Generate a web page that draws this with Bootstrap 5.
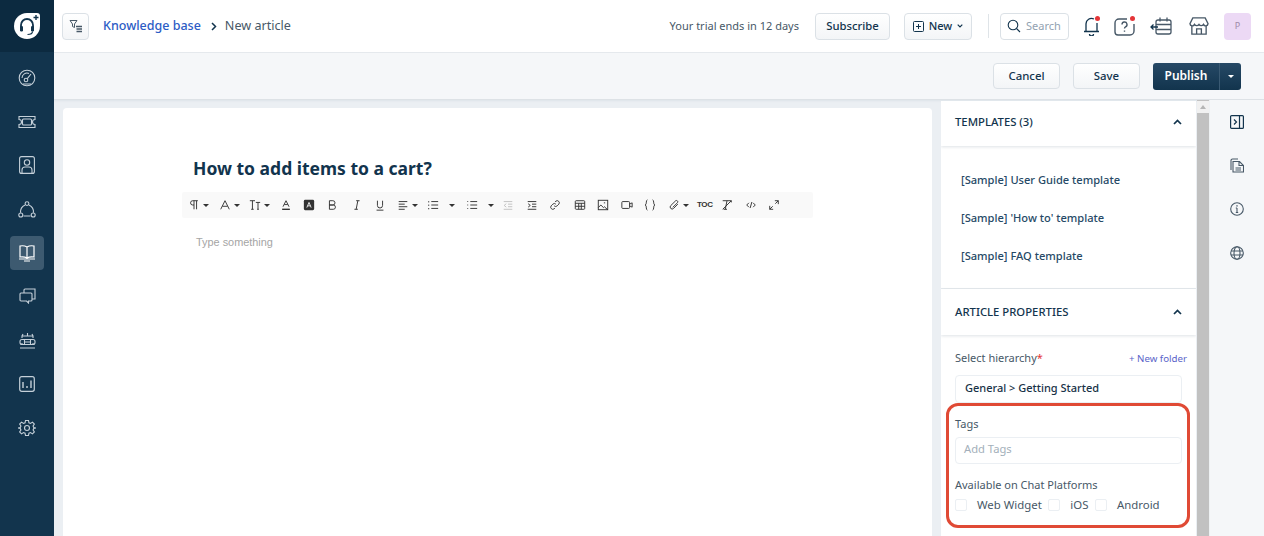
<!DOCTYPE html>
<html lang="en">
<head>
  <meta charset="UTF-8">
  <title>Knowledge base - New article</title>
  <link href="https://cdn.jsdelivr.net/npm/bootstrap@5.3.0/dist/css/bootstrap.min.css" rel="stylesheet">
  <style>
    html, body { height: 536px; overflow: hidden; }
    body { font-family: "Noto Sans", "Liberation Sans", sans-serif; color: #12344d; font-size: 11px; background: #ebeff3; }
    svg { display: block; flex: none; }
    .app-side { width: 54px; flex: none; background: #12344d; }
    .side-logo { height: 52px; background: #0c2a40; }
    .side-items { padding-top: 9px; gap: 9.7px; }
    .side-item { width: 34px; height: 34px; margin: 0 auto; border-radius: 4px; color: #c5d0d9; }
    .side-item.is-on { background: #3d5a70; color: #fff; }
    .top-bar { height: 53px; background: #fff; border-bottom: 1px solid #e6eaee; padding: 0 13px 0 8px; }
    .tool-btn { border: 1px solid #dbe1e6; border-radius: 4px; background: linear-gradient(#fff, #f3f5f7); color: #12344d; }
    .square-btn { width: 27px; height: 27px; }
    .crumb-link { font-size: 12.5px; color: #2c5cc5; font-weight: 500; margin-left: 14px; }
    .crumb-arrow { margin: 0 8px 0 10px; }
    .crumb-now { font-size: 12.6px; color: #475867; }
    .trial-text { color: #475867; font-size: 11px; margin-right: 16px; }
    .sub-btn { height: 27px; width: 75px; font-size: 11.3px; font-weight: 500; margin-right: 14px; }
    .new-btn { height: 27px; width: 68px; font-size: 11px; font-weight: 500; gap: 5px; }
    .bar-sep { width: 1px; height: 24px; background: #dfe4e8; margin: 0 11px 0 16px; }
    .search-box { width: 69px; height: 27px; border: 1px solid #dbe1e6; border-radius: 4px; color: #92a2b1; font-size: 11px; padding-left: 6px; gap: 5px; margin-right: 14px; }
    .top-icon { position: relative; color: #12344d; }
    .gap-bell { margin-right: 14px; }
    .gap-help { margin-right: 15px; }
    .gap-cal { margin-right: 17px; }
    .gap-store { margin-right: 15px; }
    .red-dot { position: absolute; width: 5px; height: 5px; background: #e43538; border-radius: 50%; top: 0; right: 0; }
    .user-chip { width: 27px; height: 27px; background: #ecd9f5; border-radius: 4px; color: #9f8aa8; font-size: 9px; }
    .action-bar { height: 47px; background: #f5f7f9; border-bottom: 1px solid #dde2e6; padding-right: 23px; box-shadow: 0 1px 2px rgba(18,52,77,.06); }
    .act-btn { height: 26px; font-size: 11.4px; font-weight: 500; }
    .act-cancel { width: 67px; margin-right: 13px; }
    .act-save { width: 67px; margin-right: 13px; }
    .publish-wrap { height: 27px; border-radius: 3px; overflow: hidden; background: linear-gradient(#264966, #12344d); color: #fff; font-size: 12px; font-weight: 600; }
    .publish-main { width: 67px; border-right: 1px solid #3a5a73; }
    .publish-drop { width: 21px; }
    .caret-down { width: 0; height: 0; border-left: 3px solid transparent; border-right: 3px solid transparent; border-top: 3.5px solid currentColor; }
    .body-row { height: 436px; }
    .editor-col { width: 887px; flex: none; padding: 8px 9px 0 9px; }
    .editor-sheet { background: #fff; height: 100%; border-radius: 4px 4px 0 0; padding-top: 48px; padding-left: 130px; }
    .article-name { font-size: 17.5px; font-weight: 700; line-height: 24px; margin: 0 0 12px; color: #12344d; }
    .fmt-bar { width: 631px; height: 26px; margin-left: -11px; background: #f9f9f9; border-radius: 2px; padding-left: 6px; color: #333; }
    .fmt-item { height: 26px; flex: none; gap: 3px; }
    .fmt-wide { gap: 10px; }
    .fmt-toc { font-family: "Liberation Sans", sans-serif; font-size: 8px; font-weight: 700; letter-spacing: -.4px; }
    .type-hint { font-family: "Liberation Sans", sans-serif; font-size: 10.9px; color: #a5a5a5; margin: 16px 0 0 3px; line-height: 16px; }
    .prop-col { width: 255px; flex: none; background: #fff; margin-top: 1px; overflow: hidden; }
    .prop-head { height: 45px; padding: 0 14px 3px 14px; font-size: 11.3px; font-weight: 500; box-shadow: 0 1px 3px rgba(18,52,77,.14); position: relative; }
    .tpl-list { height: 143px; padding-top: 15px; border-bottom: 1px solid #e6eaee; }
    .tpl-item { height: 38px; padding-left: 20px; font-size: 11.1px; line-height: 38px; color: #264966; font-weight: 500; }
    .prop-head-2 { height: 46px; padding-bottom: 0; }
    .prop-form { padding: 15px 14px 0 14px; }
    .form-cap { font-size: 11px; color: #475867; line-height: 18px; margin-top: -1px; margin-bottom: 1px; }
    .req-star { color: #e43538; }
    .folder-link { font-size: 9.7px; color: #5a63c9; margin-right: -5px; }
    .text-field { width: 227px; height: 27px; border: 1px solid #ebeff3; border-radius: 4px; padding: 0 0 2px 9px; font-size: 11px; }
    .field-general { margin: 7px 0 13px; font-weight: 500; color: #183247; height: 28px; }
    .field-tags { margin: 4px 0 13px; color: #a3afba; font-size: 11.2px; padding-left: 8px; }
    .tick-row { margin-top: 2px; height: 18px; color: #475867; font-size: 11.4px; }
    .tick-box { width: 12px; height: 12px; border: 1px solid #ebeff3; border-radius: 2px; margin-right: 10px; }
    .tick-label { margin-right: 6.500px; }
    .red-frame { position: absolute; left: 946px; top: 403px; width: 244px; height: 125px; border: 3px solid #e04a35; border-radius: 12px; pointer-events: none; }
    .scroll-col { width: 12px; flex: none; background: #c1c1c1; margin-left: 1px; position: relative; }
    .scroll-top { height: 12px; background: #f1f1f1; margin-top: 1px; }
    .scroll-arrow { width: 0; height: 0; border-left: 3px solid transparent; border-right: 3px solid transparent; border-bottom: 4px solid #b5b5b5; margin: 0 auto; position: relative; top: 4px; }
    .rail-col { flex: 1; background: #f5f7f9; border-left: 1px solid #eef1f3; color: #475867; }
    .rail-item { height: 43.7px; }
  </style>
</head>
<body>
<div class="d-flex" style="height:536px">

  <aside class="app-side d-flex flex-column">
    <div class="side-logo d-flex align-items-center justify-content-center">
      <svg width="28" height="28" viewBox="0 0 28 28"><path d="M14 1H24Q27 1 27 4V14A13 13 0 1 1 14 1Z" fill="#fff"/><path d="M8 16v-3a6 6 0 0 1 12 0v3" fill="none" stroke="#12344d" stroke-width="1.800"/><rect x="7" y="14" width="3" height="5.500" rx="1.200" fill="#12344d"/><rect x="18" y="14" width="3" height="5.500" rx="1.200" fill="#12344d"/><path d="M19.500 19.500c0 2-2 3-5 3" fill="none" stroke="#12344d" stroke-width="1.200"/><path d="M20.500 5.500h5M23 3v5" stroke="#12344d" stroke-width="1.400"/></svg>
    </div>
    <div class="side-items d-flex flex-column">
      <div class="side-item d-flex align-items-center justify-content-center"><svg width="18" height="18" viewBox="0 0 18 18" fill="none" stroke="currentColor" stroke-width="1.100"><circle cx="9" cy="9" r="7.800"/><circle cx="8" cy="11" r="1.800"/><path d="M9.300 9.700 13 5M4 9a5 5 0 0 1 7-4.500M5 15h8"/></svg></div>
      <div class="side-item d-flex align-items-center justify-content-center"><svg width="18" height="14" viewBox="0 0 18 14" fill="none" stroke="currentColor" stroke-width="1.100"><path d="M1 1.500h16v3a2.500 2.500 0 0 0 0 5v3H1v-3a2.500 2.500 0 0 0 0-5z"/><rect x="4.500" y="4" width="9" height="6" rx="1"/></svg></div>
      <div class="side-item d-flex align-items-center justify-content-center"><svg width="16" height="18" viewBox="0 0 16 18" fill="none" stroke="currentColor" stroke-width="1.100"><rect x=".6" y=".6" width="14.800" height="16.800" rx="2"/><circle cx="8" cy="6.500" r="2.700"/><path d="M3 17v-3a3 3 0 0 1 3-3h4a3 3 0 0 1 3 3v3"/></svg></div>
      <div class="side-item d-flex align-items-center justify-content-center"><svg width="18" height="17" viewBox="0 0 18 17" fill="none" stroke="currentColor" stroke-width="1.100"><circle cx="9" cy="2.600" r="1.900"/><circle cx="2.800" cy="14" r="2"/><circle cx="15.200" cy="14" r="2"/><path d="M7 4A8 8 0 0 0 2.500 11.800M11 4a8 8 0 0 1 4.500 7.800M5.500 15h7"/></svg></div>
      <div class="side-item is-on d-flex align-items-center justify-content-center"><svg width="18" height="18" viewBox="0 0 18 18" fill="none" stroke="currentColor" stroke-width="1.200"><path d="M9 3C7 1.800 4 1.600 2 2v11c2-.3 5-.2 7 1 2-1.200 5-1.300 7-1V2c-2-.4-5-.2-7 1zM9 3v11M1 15h16M6 17h6"/></svg></div>
      <div class="side-item d-flex align-items-center justify-content-center"><svg width="17" height="16" viewBox="0 0 17 16" fill="none" stroke="currentColor" stroke-width="1.100"><path d="M5 5V2a1 1 0 0 1 1-1h10v10h-3"/><path d="M2 5h10a1 1 0 0 1 1 1v6a1 1 0 0 1-1 1H9.500v2l-2-2H2a1 1 0 0 1-1-1V6a1 1 0 0 1 1-1z"/></svg></div>
      <div class="side-item d-flex align-items-center justify-content-center"><svg width="17" height="17" viewBox="0 0 17 17" fill="none" stroke="currentColor" stroke-width="1.100"><path d="M1 16h15M3 6V4h11v2M8.500 1v3M3 13v-2M14 13v-2M3 4l1-2M14 4l-1-2"/><rect x="1" y="7.500" width="15" height="5" rx="2"/><path d="M5.500 7.500v5M11.500 7.500v5M5.500 10h6"/></svg></div>
      <div class="side-item d-flex align-items-center justify-content-center"><svg width="16" height="16" viewBox="0 0 16 16" fill="none" stroke="currentColor" stroke-width="1.200"><rect x=".7" y=".7" width="14.600" height="14.600" rx="2"/><path d="M4 6v6M8 10v2M12 4.500V12" stroke-width="1.400"/></svg></div>
      <div class="side-item d-flex align-items-center justify-content-center"><svg width="18" height="18" viewBox="0 0 24 24" fill="none" stroke="currentColor" stroke-width="1.500"><circle cx="12" cy="12" r="3.300"/><path d="M10 2h4l.6 3 2.100.9 2.600-1.700 2.500 2.500L20.100 9.300l.9 2.100 3 .6v0l-3 .6-.9 2.100 1.700 2.600-2.500 2.500-2.600-1.700-2.100.9-.6 3h-4l-.6-3-2.100-.9-2.600 1.700-2.500-2.500 1.700-2.600-.9-2.100-3-.6 3-.6.9-2.100-1.700-2.600 2.500-2.500 2.600 1.700 2.100-.9z"/></svg></div>
    </div>
  </aside>

  <div class="flex-grow-1 d-flex flex-column" style="min-width:0">
    <header class="top-bar d-flex align-items-center">
      <div class="tool-btn square-btn d-flex align-items-center justify-content-center">
        <svg width="14" height="14" viewBox="0 0 14 14" fill="none" stroke="#475867" stroke-width="1"><path d="M1 1.500h7L5.500 5v3.500L3.500 7.500V5z"/><path d="M7 7.500h6M7.500 10h5.500M7.500 12.500h5.500" stroke-width="1.400"/></svg>
      </div>
      <span class="crumb-link">Knowledge base</span>
      <svg class="crumb-arrow" width="6" height="9" viewBox="0 0 6 9" fill="none" stroke="#12344d" stroke-width="1.500"><path d="M1 1l3.500 3.500L1 8"/></svg>
      <span class="crumb-now">New article</span>
      <div class="ms-auto d-flex align-items-center">
        <span class="trial-text">Your trial ends in 12 days</span>
        <div class="tool-btn sub-btn d-flex align-items-center justify-content-center">Subscribe</div>
        <div class="tool-btn new-btn d-flex align-items-center justify-content-center">
          <svg width="11" height="11" viewBox="0 0 11 11" fill="none" stroke="#12344d" stroke-width="1"><rect x=".5" y=".5" width="10" height="10" rx="1"/><path d="M5.500 3v5M3 5.500h5"/></svg>
          <span>New</span>
          <svg width="6" height="4" viewBox="0 0 6 4" fill="none" stroke="#12344d" stroke-width="1.200"><path d="M.7.700 3 3 5.300.700"/></svg>
        </div>
        <div class="bar-sep"></div>
        <div class="search-box d-flex align-items-center">
          <svg width="14" height="14" viewBox="0 0 14 14" fill="none" stroke="#12344d" stroke-width="1.100"><circle cx="6" cy="6" r="4.800"/><path d="M9.500 9.500 13 13"/></svg>
          <span>Search</span>
        </div>
        <div class="top-icon gap-bell"><svg width="17" height="20" viewBox="0 0 17 20" fill="none" stroke="#12344d" stroke-width="1.300"><path d="M3 15V8a5.500 5.500 0 0 1 8-5M14 7v8M1 15.500h15M6.500 18a2 2 0 0 0 4 0"/></svg><span class="red-dot"></span></div>
        <div class="top-icon gap-help"><svg width="21" height="20" viewBox="0 0 21 20" fill="none" stroke="#475867" stroke-width="1.400"><path d="M13 3H5a4 4 0 0 0-4 4v9a3 3 0 0 0 3 3h12a4 4 0 0 0 4-4V8"/><path d="M8 8.500a2.500 2.500 0 1 1 3.500 2.300c-1 .5-1 1-1 1.800M10.500 14.500v1.200"/></svg><span class="red-dot"></span></div>
        <div class="top-icon gap-cal"><svg width="22" height="18" viewBox="0 0 22 18" fill="none" stroke="#475867" stroke-width="1.300"><rect x="6" y="3" width="15" height="14" rx="2"/><path d="M6 7.500h15M6 12.500h15M10 .5v4M17 .5v4"/><path d="M1 10h7M3.500 7.500 1 10l2.500 2.500" stroke="#12344d"/></svg></div>
        <div class="top-icon gap-store"><svg width="20" height="20" viewBox="0 0 21 20" fill="none" stroke="#475867" stroke-width="1.400"><path d="M4 1.500h13l3 6a2.500 2.500 0 0 1-4.800.8 2.800 2.800 0 0 1-4.700 0 2.800 2.800 0 0 1-4.700 0A2.500 2.500 0 0 1 1 7.500zM3 10v8.500h15V10M8 18.500V13h5v5.500"/></svg></div>
        <div class="user-chip d-flex align-items-center justify-content-center">P</div>
      </div>
    </header>

    <div class="action-bar d-flex align-items-center justify-content-end">
      <div class="tool-btn act-btn act-cancel d-flex align-items-center justify-content-center">Cancel</div>
      <div class="tool-btn act-btn act-save d-flex align-items-center justify-content-center">Save</div>
      <div class="publish-wrap d-flex">
        <div class="publish-main d-flex align-items-center justify-content-center">Publish</div>
        <div class="publish-drop d-flex align-items-center justify-content-center"><span class="caret-down"></span></div>
      </div>
    </div>

    <div class="body-row d-flex">
      <div class="editor-col">
        <div class="editor-sheet">
          <h1 class="article-name">How to add items to a cart?</h1>
          <div class="fmt-bar d-flex align-items-center" id="fmtBar"></div>
          <p class="type-hint">Type something</p>
        </div>
      </div>

      <div class="prop-col">
        <div class="prop-head d-flex align-items-center justify-content-between">
          <span>TEMPLATES (3)</span>
          <svg width="9" height="6" viewBox="0 0 9 6" fill="none" stroke="#12344d" stroke-width="1.700"><path d="M1 5 4.500 1.500 8 5"/></svg>
        </div>
        <div class="tpl-list">
          <div class="tpl-item">[Sample] User Guide template</div>
          <div class="tpl-item">[Sample] 'How to' template</div>
          <div class="tpl-item">[Sample] FAQ template</div>
        </div>
        <div class="prop-head prop-head-2 d-flex align-items-center justify-content-between">
          <span>ARTICLE PROPERTIES</span>
          <svg width="9" height="6" viewBox="0 0 9 6" fill="none" stroke="#12344d" stroke-width="1.700"><path d="M1 5 4.500 1.500 8 5"/></svg>
        </div>
        <div class="prop-form">
          <div class="d-flex justify-content-between align-items-center">
            <span class="form-cap">Select hierarchy<span class="req-star">*</span></span>
            <span class="folder-link">+ New folder</span>
          </div>
          <div class="text-field field-general d-flex align-items-center">General &gt; Getting Started</div>
          <div class="form-cap">Tags</div>
          <div class="text-field field-tags d-flex align-items-center">Add Tags</div>
          <div class="form-cap">Available on Chat Platforms</div>
          <div class="tick-row d-flex align-items-center">
            <span class="tick-box"></span><span class="tick-label">Web Widget</span>
            <span class="tick-box"></span><span class="tick-label">iOS</span>
            <span class="tick-box"></span><span class="tick-label">Android</span>
          </div>
        </div>
      </div>

      <div class="scroll-col"><div class="scroll-top"><div class="scroll-arrow"></div></div></div>

      <div class="rail-col d-flex flex-column align-items-center">
        <div class="rail-item d-flex align-items-center"><svg width="14" height="14" viewBox="0 0 14 14" fill="none" stroke="#12344d" stroke-width="1.200"><rect x=".6" y=".6" width="12.800" height="12.800" rx="1"/><path d="M9.500 1v12M4 4.500 6.500 7 4 9.500"/></svg></div>
        <div class="rail-item d-flex align-items-center"><svg width="14" height="15" viewBox="0 0 14 15" fill="none" stroke="#475867" stroke-width="1.100"><path d="M3 3.500h6.500l4 4V14H3zM9 3.500V7.500h4.500M1 12V2.500A1.500 1.500 0 0 1 2.500 1H8M5.500 10h5.500M5.500 12h5.500"/></svg></div>
        <div class="rail-item d-flex align-items-center"><svg width="14" height="14" viewBox="0 0 14 14" fill="none" stroke="#475867" stroke-width="1.100"><circle cx="7" cy="7" r="6.300"/><path d="M7 6v4.500M5.800 10.500h2.400M5.800 6H7" /><path d="M7 3.200v1.200" stroke-width="1.400"/></svg></div>
        <div class="rail-item d-flex align-items-center"><svg width="14" height="14" viewBox="0 0 14 14" fill="none" stroke="#475867" stroke-width="1.100"><circle cx="7" cy="7" r="6.300"/><ellipse cx="7" cy="7" rx="3" ry="6.300"/><path d="M1 5h12M1 9h12"/></svg></div>
      </div>
    </div>
  </div>
</div>

<div class="red-frame"></div>

<script src="https://cdn.jsdelivr.net/npm/bootstrap@5.3.0/dist/js/bootstrap.bundle.min.js"></script>
<script>
  // editor toolbar: [svg inner, caret (0 none, 1 close, 2 wide), cell width]
  const line = 'fill="none" stroke="#333" stroke-width="1.100"';
  const fmtItems = [
    ['<path d="M10 2v10M7 2v10M11.500 2H5.500a2.500 2.500 0 0 0 0 5H7" ' + line + '/>', 1, 30.5],
    ['<path d="M2 12 7 2l5 10M4 8.500h6" ' + line + '/>', 1, 30.5],
    ['<path d="M1 2h6M4 2v10M2.500 12h3M8 4h5M10.500 4v8M9.500 12h2" ' + line + '/>', 1, 31],
    ['<path d="M3.500 9 7 2l3.500 7M5 6.500h4" ' + line + '/><path d="M2.500 12h9" stroke="#222" stroke-width="1.500"/>', 0, 22.5],
    ['<rect x="1" y="1" width="12" height="12" rx="1.500" fill="#333"/><path d="M4.500 10 7 4l2.500 6M5.500 8h3" fill="none" stroke="#fff" stroke-width="1"/>', 0, 23],
    ['<path d="M4 2h4a2.500 2.500 0 0 1 0 5H4zM4 7h4.500a2.500 2.500 0 0 1 0 5H4z" ' + line + '/>', 0, 25],
    ['<path d="M6 2h4M4 12h4M8 2 6 12" ' + line + '/>', 0, 23],
    ['<path d="M4 2v5.500a3 3 0 0 0 6 0V2M3 13h8" ' + line + '/>', 0, 23.5],
    ['<path d="M2 3h10M2 6h7M2 9h10M2 12h7" ' + line + '/>', 1, 30],
    ['<path d="M5 3h8M5 7h8M5 11h8M2 2.500v1.500M2 6.500v1.500M2 10.500v1.500" ' + line + '/>', 2, 39],
    ['<path d="M5 3h8M5 7h8M5 11h8M2 2.500v1M2 6.500v1M2 10.500v1" ' + line + '/>', 2, 36],
    ['<path d="M2 3h10M7 6h5M7 9h5M2 12h10M5 5.500 2.500 7.500 5 9.500" fill="none" stroke="#bbb" stroke-width="1"/>', 0, 24],
    ['<path d="M2 3h10M7 6h5M7 9h5M2 12h10M2.500 5.500 5 7.500 2.500 9.500" ' + line + '/>', 0, 23],
    ['<path d="M6 8a2.500 2.500 0 0 0 3.500 0l2-2A2.500 2.500 0 0 0 8 2.500L7 3.500M8 6a2.500 2.500 0 0 0-3.500 0l-2 2A2.500 2.500 0 0 0 6 11.500l1-1" ' + line + '/>', 0, 24.5],
    ['<rect x="1.500" y="2" width="11" height="10" rx="1" ' + line + '/><path d="M1.500 5h11M1.500 8.500h11M5.500 5v7M8.500 5v7" ' + line + '/>', 0, 23.5],
    ['<rect x="1.500" y="1.500" width="11" height="11" ' + line + '/><path d="M1.500 10l3-3 3 3 1-1 4 3.500M8 4.500h1.500" ' + line + '/>', 0, 23.5],
    ['<rect x="1" y="3" width="9" height="8" rx="1" ' + line + '/><path d="M10 6l3-1.500v5L10 8" ' + line + '/>', 0, 23.5],
    ['<path d="M4 1C2 1 3.500 6 1.500 7 3.500 8 2 13 4 13M10 1c2 0 .5 5 2.500 6-2 1-.5 6-2.500 6" ' + line + '/>', 0, 24],
    ['<path d="M11.500 6 6.500 11a2.300 2.300 0 0 1-3.300-3.300L9 2a1.600 1.600 0 0 1 2.200 2.200L5.500 9.800" ' + line + '/>', 1, 29]
  ];
  const tailItems = [
    ['<path d="M2 2h10v2M7 2 5 12M2 12 12 2M3 12h4" ' + line + '/>', 0, 23.5],
    ['<path d="M4.500 4.500 2 7l2.500 2.500M9.500 4.500 12 7 9.500 9.500M8 3.500 6 10.500" ' + line + '/>', 0, 23.5],
    ['<path d="M8 2h4v4M12 2 8.500 5.500M6 12H2V8M2 12l3.500-3.500" ' + line + '/>', 0, 24]
  ];
  const fmtBar = document.getElementById('fmtBar');

  function addItem(item) {
    const cell = document.createElement('div');
    cell.className = 'fmt-item d-flex align-items-center';
    if (item[1] === 2) cell.classList.add('fmt-wide');
    cell.style.width = item[2] + 'px';
    let caret = '';
    if (item[1]) caret = '<span class="caret-down"></span>';
    cell.innerHTML = `<svg width="12" height="12" viewBox="0 0 14 14">${item[0]}</svg>${caret}`;
    fmtBar.appendChild(cell);
  }

  fmtItems.forEach(addItem);
  const toc = document.createElement('div');
  toc.className = 'fmt-item fmt-toc d-flex align-items-center';
  toc.style.width = '24px';
  toc.textContent = 'TOC';
  fmtBar.appendChild(toc);
  tailItems.forEach(addItem);
</script>
</body>
</html>
